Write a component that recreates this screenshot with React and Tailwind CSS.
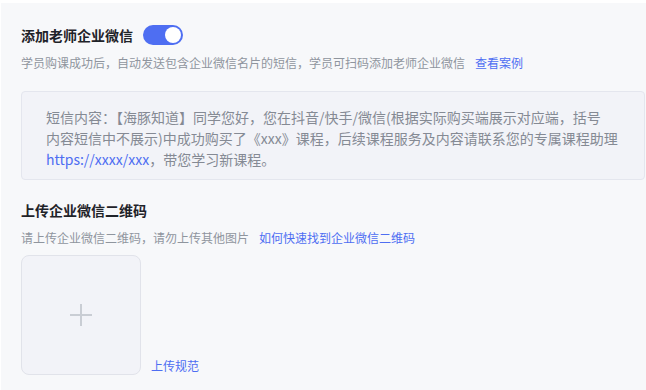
const font = { fontFamily: '"Noto Sans CJK SC", "Noto Sans", sans-serif' };

function Toggle({ on }) {
  return (
    <div
      className={`flex h-5 w-10 items-center rounded-full px-[2px] ${
        on ? "justify-end bg-[#4e6ef2]" : "justify-start bg-[#c9cdd4]"
      }`}
    >
      <div className="h-4 w-4 rounded-full bg-white" />
    </div>
  );
}

function PlusIcon() {
  return (
    <svg width="24" height="24" viewBox="0 0 24 24" aria-hidden="true">
      <path d="M12 1v22M1 12h22" stroke="#c9cdd4" strokeWidth="2" fill="none" />
    </svg>
  );
}

export default function App() {
  return (
    <div className="bg-white pl-[1px] pt-[3px]" style={font}>
      <div className="min-h-[387px] bg-[#f7f8fa] pl-5 pt-[22px]">
        <div className="flex h-5 items-center gap-[10px]">
          <h3 className="text-[14px] font-bold leading-5 text-[#1f2329]">
            添加老师企业微信
          </h3>
          <Toggle on />
        </div>
        <p className="mt-[9px] flex gap-[10px] text-[12px] leading-[18px] text-[#8f959e]">
          <span>
            学员购课成功后，自动发送包含企业微信名片的短信，学员可扫码添加老师企业微信
          </span>
          <span className="text-[#4e6ef2]">查看案例</span>
        </p>

        <div className="mt-[19px] mr-[1px] rounded border border-[#e4e6ee] bg-[#f2f3f8] px-6 pb-[9px] pt-[15px] text-[14px] leading-[21px] text-[#858a94] whitespace-nowrap">
          短信内容：【海豚知道】同学您好，您在抖音/快手/微信(根据实际购买端展示对应端，括号
          <br />
          内容短信中不展示)中成功购买了《xxx》课程，后续课程服务及内容请联系您的专属课程助理
          <br />
          <span className="text-[#4e6ef2]">https://xxxx/xxx</span>，带您学习新课程。
        </div>

        <h3 className="mt-5 text-[14px] font-bold leading-5 text-[#1f2329]">
          上传企业微信二维码
        </h3>
        <p className="mt-[9px] flex gap-[10px] text-[12px] leading-[18px] text-[#8f959e]">
          <span>请上传企业微信二维码，请勿上传其他图片</span>
          <span className="text-[#4e6ef2]">如何快速找到企业微信二维码</span>
        </p>

        <div className="mt-2 flex items-end gap-[10px]">
          <div className="grid h-[120px] w-[120px] place-items-center rounded-lg border border-[#e1e3ea] bg-[#f2f3f8]">
            <PlusIcon />
          </div>
          <span className="text-[12px] leading-[18px] text-[#4e6ef2]">上传规范</span>
        </div>
      </div>
    </div>
  );
}
